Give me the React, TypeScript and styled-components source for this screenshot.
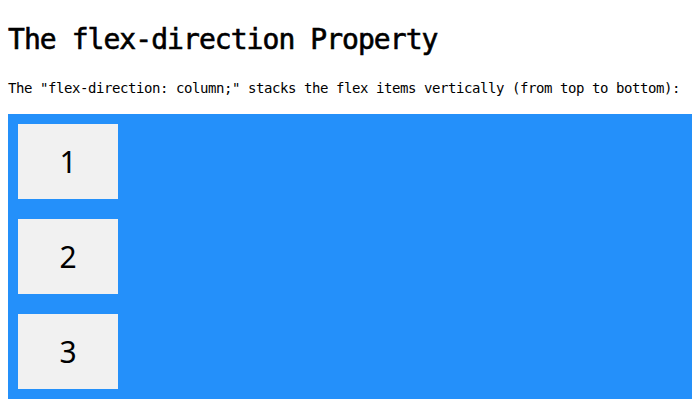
import React from "react";
import styled, { createGlobalStyle } from "styled-components";

const GlobalStyle = createGlobalStyle`
    body {
        margin: 0;
        background: #ffffff;
    }
`;

const Page = styled.div`
    padding: 0 8px;
    font-family: "DejaVu Sans Mono", "Liberation Mono", monospace;
    color: #000000;
`;

const Title = styled.h1`
    margin: 24px 0 0;
    font-size: 28px;
    line-height: 32px;
    font-weight: 400;
    -webkit-text-stroke: 0.6px #000000;
    letter-spacing: -0.95px;
`;

const Paragraph = styled.p`
    margin: 24px 0 17px;
    font-size: 14px;
    line-height: 17px;
    letter-spacing: -0.43px;
    white-space: nowrap;
`;

const FlexContainer = styled.div`
    display: flex;
    flex-direction: column;
    background-color: #2490fa;
`;

const FlexItem = styled.div`
    background-color: #f1f1f1;
    width: 100px;
    height: 75px;
    margin: 10px;
    display: flex;
    align-items: center;
    justify-content: center;
    font-family: "Noto Sans", "Open Sans", sans-serif;
    font-size: 30px;
    color: #000000;
`;

const items = ["1", "2", "3"];

const App = () => {
    return (
        <Page>
            <GlobalStyle />
            <Title>The flex-direction Property</Title>
            <Paragraph>
                The "flex-direction: column;" stacks the flex items vertically (from top to bottom):
            </Paragraph>
            <FlexContainer>
                {items.map((item) => (
                    <FlexItem key={item}>{item}</FlexItem>
                ))}
            </FlexContainer>
        </Page>
    );
};

export default App;
